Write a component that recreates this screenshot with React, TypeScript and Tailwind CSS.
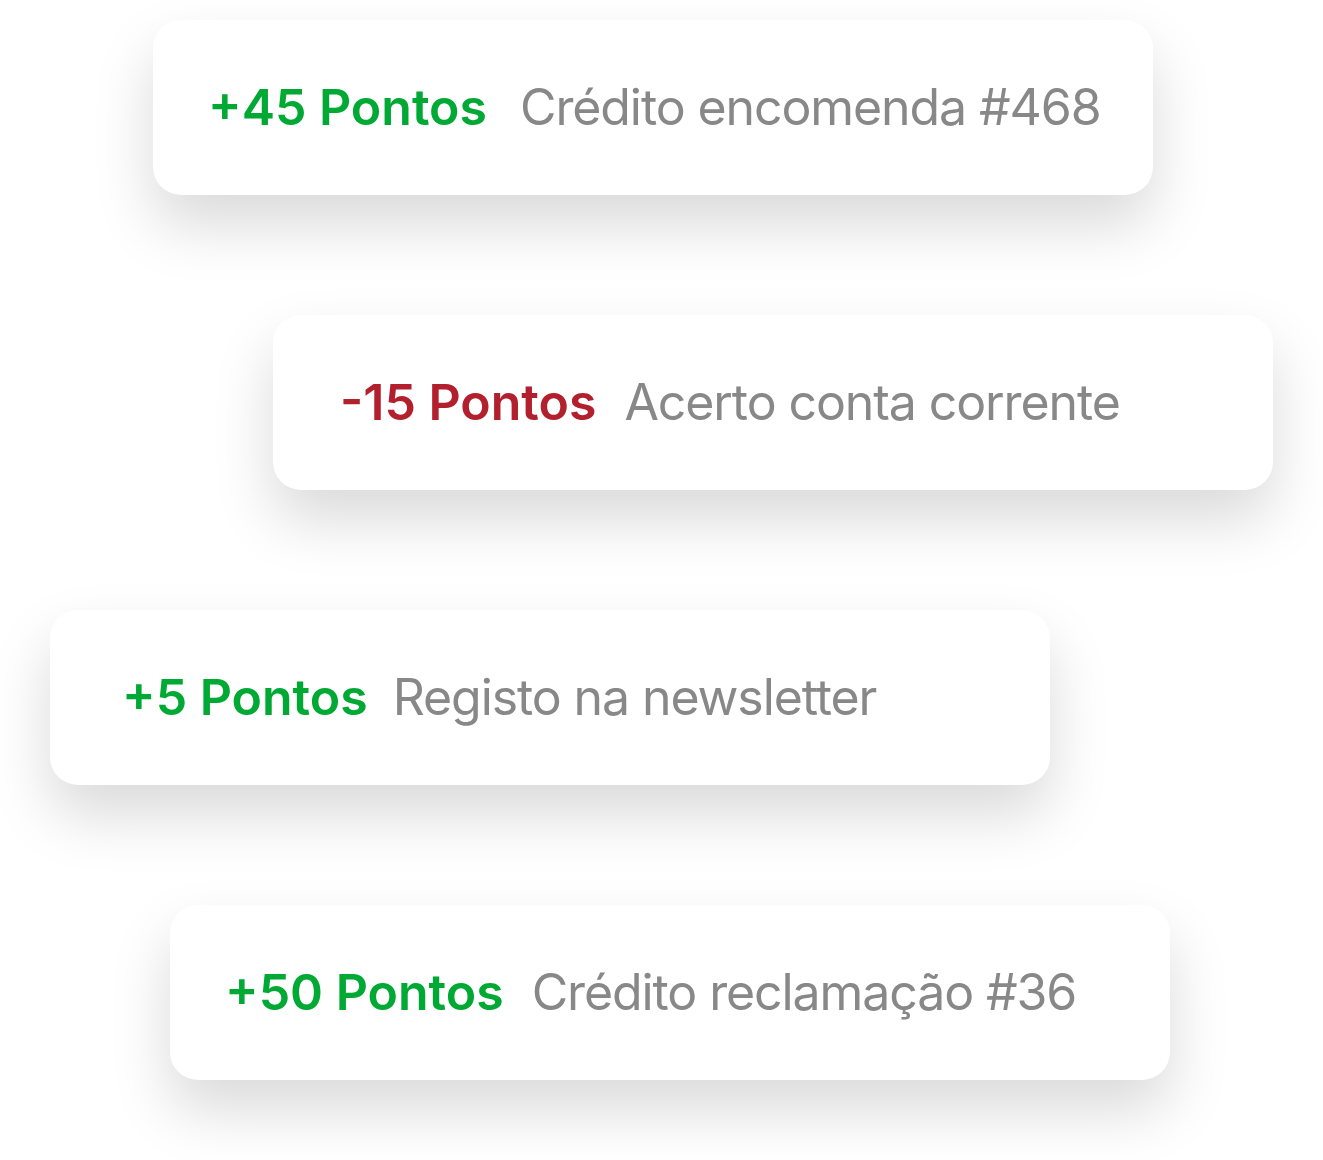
import React from "react";

type Item = { pts: string; desc: string; neg?: boolean; ml: string; pl: string; gap: string };

const items: Item[] = [
  { pts: "+45 Pontos", desc: "Crédito encomenda #468", ml: "ml-[153px]", pl: "pl-[55px]", gap: "gap-[33px]" },
  { pts: "-15 Pontos", desc: "Acerto conta corrente", neg: true, ml: "ml-[273px]", pl: "pl-[67px]", gap: "gap-[28px]" },
  { pts: "+5 Pontos", desc: "Registo na newsletter", ml: "ml-[50px]", pl: "pl-[72px]", gap: "gap-[25px]" },
  { pts: "+50 Pontos", desc: "Crédito reclamação #36", ml: "ml-[170px]", pl: "pl-[55px]", gap: "gap-[28px]" },
];

export default function App() {
  return (
    <div className="w-[1323px] h-[1160px] bg-white overflow-hidden pt-[20px] flex flex-col gap-[120px]" style={{ fontFamily: "Inter, 'Noto Sans', sans-serif" }}>
      {items.map((it, i) => (
        <div
          key={i}
          className={`${it.ml} ${it.pl} ${it.gap} w-[1000px] h-[175px] shrink-0 rounded-[28px] bg-white shadow-[0_30px_60px_rgba(0,0,0,0.15)] flex items-center`}
        >
          <span className={`text-[50px] font-semibold ${it.neg ? "text-[#b21f2d]" : "text-[#00a933]"}`}>{it.pts}</span>
          <span className="text-[50px] font-normal tracking-[-1.1px] text-[#888888]">{it.desc}</span>
        </div>
      ))}
    </div>
  );
}
